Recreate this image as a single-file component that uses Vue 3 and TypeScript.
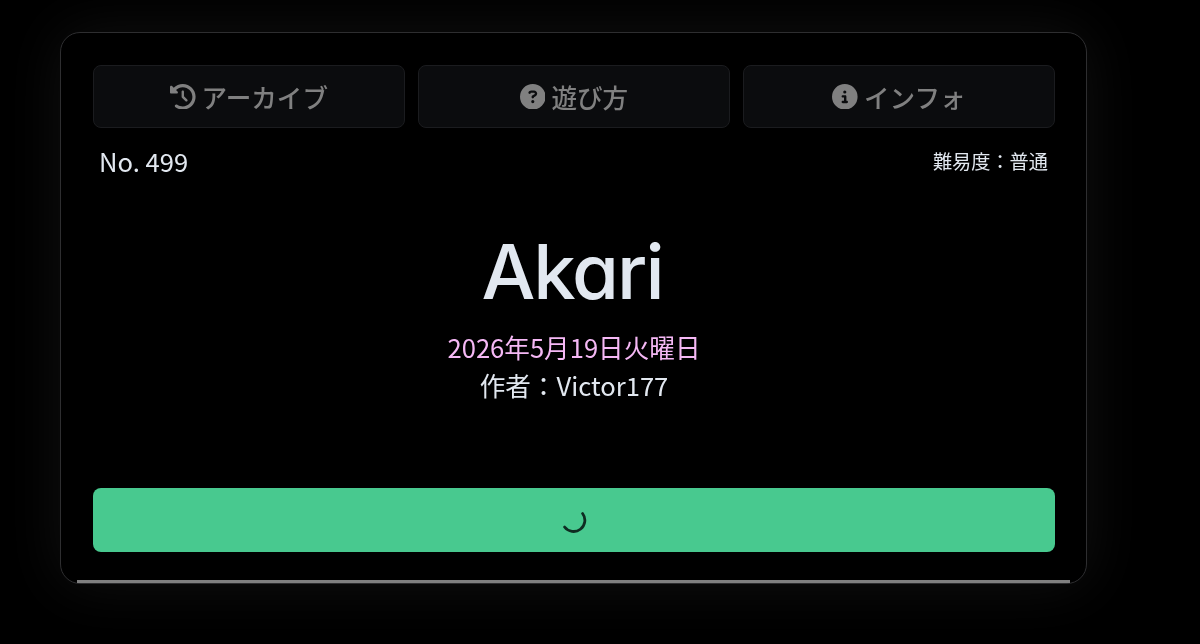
<script setup lang="ts">
interface Tab { label: string; path: string }
const tabs: Tab[] = [
  { label: 'アーカイブ', path: 'M75 75L41 41C25.9 25.9 0 36.6 0 57.9V168c0 13.3 10.7 24 24 24H134.1c21.4 0 32.1-25.9 17-41l-30.8-30.8C155 85.5 203 64 256 64c106 0 192 86 192 192s-86 192-192 192c-40.8 0-78.6-12.7-109.7-34.4c-14.5-10.1-34.4-6.6-44.6 7.9s-6.6 34.4 7.9 44.6C151.2 495 201.7 512 256 512c141.4 0 256-114.6 256-256S397.4 0 256 0C185.3 0 121.3 28.7 75 75zm181 53c-13.3 0-24 10.7-24 24V256c0 6.4 2.5 12.5 7 17l72 72c9.4 9.4 24.6 9.4 33.9 0s9.4-24.6 0-33.9l-65-65V152c0-13.3-10.7-24-24-24z' },
  { label: '遊び方', path: 'M256 512A256 256 0 1 0 256 0a256 256 0 1 0 0 512zM169.8 165.3c7.9-22.3 29.1-37.3 52.8-37.3h58.3c34.9 0 63.1 28.3 63.1 63.1c0 22.6-12.1 43.5-31.7 54.8L280 264.4c-.2 13-10.9 23.6-24 23.6c-13.3 0-24-10.7-24-24V250.5c0-8.6 4.6-16.5 12.1-20.8l44.3-25.4c4.7-2.7 7.6-7.7 7.6-13.1c0-8.4-6.8-15.1-15.1-15.1H222.6c-3.4 0-6.4 2.1-7.5 5.3l-.4 1.2c-4.4 12.5-18.2 19-30.6 14.6s-19-18.2-14.6-30.6l.4-1.2zM224 352a32 32 0 1 1 64 0 32 32 0 1 1 -64 0z' },
  { label: 'インフォ', path: 'M256 512A256 256 0 1 0 256 0a256 256 0 1 0 0 512zM216 336h24V272H216c-13.3 0-24-10.7-24-24s10.7-24 24-24h48c13.3 0 24 10.7 24 24v88h8c13.3 0 24 10.7 24 24s-10.7 24-24 24H216c-13.3 0-24-10.7-24-24s10.7-24 24-24zm40-208a32 32 0 1 1 0 64 32 32 0 1 1 0-64z' },
]
</script>

<template>
  <main class="page">
    <section class="card">
      <nav class="tabs">
        <button v-for="t in tabs" :key="t.label" class="tab" type="button">
          <svg class="icon" viewBox="0 0 512 512" aria-hidden="true"><path :d="t.path" fill="currentColor" /></svg>
          <span>{{ t.label }}</span>
        </button>
      </nav>
      <div class="meta">
        <span class="number">No. 499</span>
        <span class="level">難易度：普通</span>
      </div>
      <div class="hero">
        <h1 class="title">Akari</h1>
        <p class="date">2026年5月19日火曜日</p>
        <p class="author">作者：Victor177</p>
      </div>
      <button class="start" type="button" aria-label="読み込み中">
        <svg class="spinner" viewBox="0 0 26 26" aria-hidden="true">
          <path d="M21.6 6.5A11 11 0 0 1 3.6 20" fill="none" stroke="#0f2c22" stroke-width="2.8" stroke-linecap="round" />
        </svg>
      </button>
      <div class="progress"></div>
    </section>
  </main>
</template>

<style>
html, body { margin: 0; background: #000; }
</style>

<style scoped>
.page {
  width: 1200px;
  height: 644px;
  overflow: hidden;
  background: #000;
  padding: 32px 113px 0 60px;
  box-sizing: border-box;
  font-family: "Noto Sans CJK JP", "Noto Sans", sans-serif;
}
.card {
  position: relative;
  box-sizing: border-box;
  width: 1027px;
  height: 552px;
  padding: 32px 31px 31px 32px;
  border: 1px solid #2e2e30;
  border-radius: 20px;
  background: #000;
  box-shadow: 0 0 60px rgba(255, 255, 255, 0.065);
  display: flex;
  flex-direction: column;
}
.tabs {
  display: grid;
  grid-template-columns: repeat(3, 1fr);
  gap: 13px;
}
.tab {
  height: 63px;
  display: flex;
  align-items: center;
  justify-content: center;
  gap: 6px;
  padding: 0;
  border: 1px solid #1b1c1f;
  border-radius: 8px;
  background: #0b0c0e;
  color: #808080;
  font-family: inherit;
  font-size: 25.6px;
  font-weight: 500;
  will-change: transform;
}
.icon { width: 25.6px; height: 25.6px; flex: none; }
.meta {
  display: flex;
  justify-content: space-between;
  align-items: center;
  padding: 0 7px 0 6px;
  margin-top: 12px;
  height: 40px;
  color: #e2e8f0;
  will-change: transform;
}
.number { font-size: 25.6px; }
.level { font-size: 19.2px; padding-top: 2px; }
.hero {
  margin-top: 41px;
  text-align: center;
  color: #e2e8f0;
  will-change: transform;
}
.title {
  margin: 0;
  padding-right: 4px;
  font-family: Inter, sans-serif;
  font-feature-settings: "cv11" 1;
  font-size: 76px;
  font-weight: 500;
  letter-spacing: -2px;
  line-height: 100px;
}
.date, .author {
  margin: 0;
  font-size: 25.6px;
  line-height: 38.4px;
}
.date { color: #f5b8f5; margin-top: 7px; }
.start {
  margin-top: auto;
  height: 64px;
  flex: none;
  display: flex;
  align-items: center;
  justify-content: center;
  padding: 0;
  border: none;
  border-radius: 8px;
  background: #48c98f;
}
.spinner { width: 26px; height: 26px; }
.progress {
  position: absolute;
  left: 16px;
  right: 16px;
  bottom: 0;
  height: 3px;
  background: #808080;
}
</style>
